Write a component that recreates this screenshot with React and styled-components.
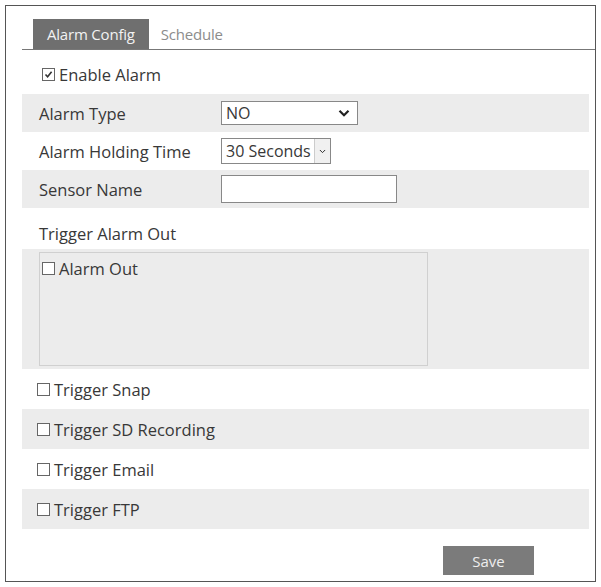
import React from 'react'
import styled, { createGlobalStyle } from 'styled-components'

const GlobalStyle = createGlobalStyle`
  body {
    margin: 0;
    background: #fff;
    font-family: "Open Sans", "Liberation Sans", sans-serif;
    color: #383838;
  }
`

const Frame = styled.div`
  margin: 5px;
  width: 589px;
  height: 575px;
  border: 1px solid #555;
  display: flex;
  flex-direction: column;
`

const TabBar = styled.div`
  display: flex;
  align-items: flex-end;
  margin: 13px 0 0 16px;
  padding-left: 11px;
  border-bottom: 1px solid #777;
  height: 30px;
`

const Tab = styled.div`
  height: 30px;
  display: flex;
  align-items: center;
  padding: 0 ${p => (p.active ? 14 : 12)}px;
  font-size: 15px;
  letter-spacing: -0.2px;
  color: ${p => (p.active ? '#f2f2f2' : '#8c8c8c')};
  background: ${p => (p.active ? '#6f6f6f' : 'transparent')};
`

const Rows = styled.div`
  display: flex;
  flex-direction: column;
  margin: 4px 6px 0 16px;
`

const Row = styled.div`
  display: flex;
  align-items: center;
  box-sizing: border-box;
  height: ${p => p.h || 38}px;
  padding-left: ${p => p.pad ?? 17}px;
  padding-top: ${p => p.top || 0}px;
  background: ${p => (p.shade ? '#ececec' : '#fff')};
  font-size: 16.5px;
`

const Label = styled.div`
  width: 182px;
`

const Check = styled.span`
  width: 11px;
  height: 11px;
  border: 1px solid #666;
  background: #fff;
  margin-right: 4px;
  display: inline-flex;
  align-items: center;
  justify-content: center;
  flex: none;
`

const Checked = () => (
  <Check>
    <svg width="9" height="9" viewBox="0 0 9 9">
      <path d="M1.5 4.5 L3.6 6.7 L7.6 1.8" stroke="#333" strokeWidth="1.6" fill="none" />
    </svg>
  </Check>
)

const Select = styled.div`
  width: ${p => p.w}px;
  height: ${p => p.hgt || 24}px;
  box-sizing: border-box;
  border: 1px solid #888;
  background: #fff;
  display: flex;
  align-items: center;
  justify-content: space-between;
  padding-left: 4px;
  font-size: 16px;
`

const Arrow = styled.span`
  display: flex;
  align-items: center;
  justify-content: center;
  width: ${p => (p.boxed ? 15 : 26)}px;
  height: 100%;
  border-left: ${p => (p.boxed ? '1px solid #ccc' : 'none')};
  background: ${p => (p.boxed ? '#f0f0f0' : 'transparent')};
`

const Input = styled.div`
  width: 176px;
  height: 28px;
  box-sizing: border-box;
  border: 1px solid #888;
  background: #fff;
`

const OutBand = styled.div`
  background: #ececec;
  padding: 3px 0 3px 17px;
  height: 120px;
  box-sizing: border-box;
`

const OutBox = styled.div`
  width: 389px;
  height: 100%;
  box-sizing: border-box;
  border: 1px solid #d0d0d0;
  padding: 4px 0 0 2px;
  display: flex;
  align-items: flex-start;
  font-size: 16.5px;
`

const OutItem = styled.div`
  display: flex;
  align-items: center;
`

const Footer = styled.div`
  display: flex;
  justify-content: flex-end;
  padding: 17px 61px 0 0;
`

const SaveButton = styled.div`
  width: 91px;
  height: 29px;
  background: #7b7b7b;
  color: #eee;
  font-size: 15px;
  display: flex;
  align-items: center;
  justify-content: center;
`

const Chevron = ({ size = 12, stroke = 2.2 }) => (
  <svg width={size} height={size * 0.7} viewBox="0 0 12 8">
    <path d="M1.5 1.5 L6 6 L10.5 1.5" stroke="#222" strokeWidth={stroke} fill="none" />
  </svg>
)

const triggers = ['Trigger Snap', 'Trigger SD Recording', 'Trigger Email', 'Trigger FTP']

export default function App() {
  return (
    <>
      <GlobalStyle />
      <Frame>
        <TabBar>
          <Tab active>Alarm Config</Tab>
          <Tab>Schedule</Tab>
        </TabBar>
        <Rows>
          <Row h={40} pad={20}>
            <Checked />
            Enable Alarm
          </Row>
          <Row shade>
            <Label>Alarm Type</Label>
            <Select w={137}>
              NO
              <Arrow>
                <Chevron />
              </Arrow>
            </Select>
          </Row>
          <Row>
            <Label>Alarm Holding Time</Label>
            <Select w={110} hgt={26}>
              30 Seconds
              <Arrow boxed>
                <Chevron size={7} stroke={1.6} />
              </Arrow>
            </Select>
          </Row>
          <Row shade>
            <Label>Sensor Name</Label>
            <Input />
          </Row>
          <Row h={41} top={10}>Trigger Alarm Out</Row>
          <OutBand>
            <OutBox>
              <OutItem>
                <Check />
                Alarm Out
              </OutItem>
            </OutBox>
          </OutBand>
          {triggers.map((t, i) => (
            <Row key={t} h={40} pad={15} shade={i % 2 === 1}>
              <Check />
              {t}
            </Row>
          ))}
        </Rows>
        <Footer>
          <SaveButton>Save</SaveButton>
        </Footer>
      </Frame>
    </>
  )
}
